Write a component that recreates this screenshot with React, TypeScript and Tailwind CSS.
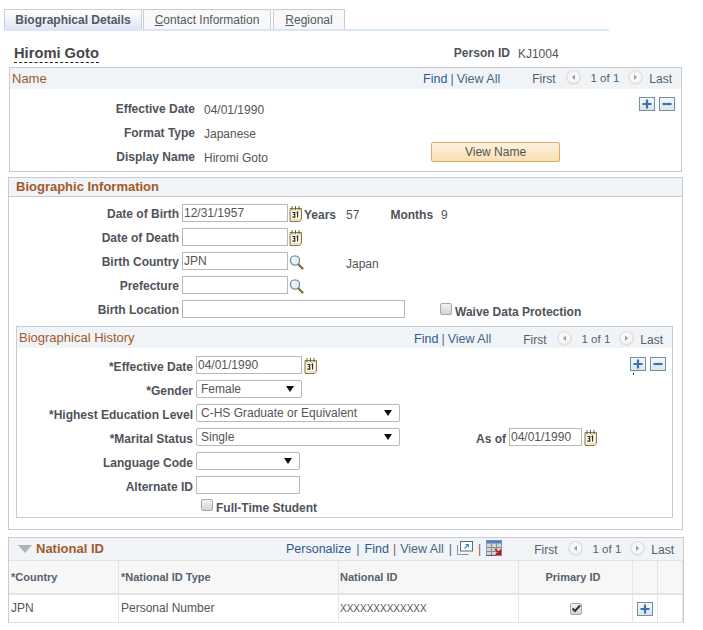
import React from "react";

const Cal = () => (
  <svg width="14" height="18" viewBox="0 0 14 18" className="mt-[1px] shrink-0">
    <path d="M1 3.5h11.5v11l-2 2H1z" fill="#f3e4b8" stroke="#8a7a50" strokeWidth="1" />
    <rect x="2.5" y="6" width="8.5" height="8" fill="#fffdf2" />
    <path d="M3 1v4M6.5 1v4M10 1v4" stroke="#6b6040" strokeWidth="1" />
    <path d="M3.4 7.5h2.4v1.4l-1 .6 1 .6v2h-2.4M7.6 8l1-.8v5.4" fill="none" stroke="#222" strokeWidth="1.1" />
  </svg>
);

const Lens = () => (
  <svg width="15" height="16" viewBox="0 0 15 16" className="mt-[1px] shrink-0">
    <path d="M9 10l4.5 4.5" stroke="#7d6a30" strokeWidth="2.2" strokeLinecap="round" />
    <circle cx="6" cy="6.5" r="4.6" fill="#e4f0f6" stroke="#7b8b94" strokeWidth="1.3" />
    <path d="M3.5 6a2.6 2.6 0 0 1 2.4-2.3" fill="none" stroke="#fff" strokeWidth="1.2" />
  </svg>
);

const Plus = () => (
  <button className="flex h-[14px] w-[16px] items-center justify-center border border-[#6f929b] bg-linear-to-b from-[#f4f8fa] to-[#dbe6ea]">
    <svg width="10" height="10" viewBox="0 0 10 10"><path d="M5 0.5v9M0.5 5h9" stroke="#3a72ad" strokeWidth="2.2" /></svg>
  </button>
);

const Minus = () => (
  <button className="flex h-[14px] w-[16px] items-center justify-center border border-[#6f929b] bg-linear-to-b from-[#f4f8fa] to-[#dbe6ea]">
    <svg width="10" height="10" viewBox="0 0 10 10"><path d="M0.5 5h9" stroke="#3a72ad" strokeWidth="2.2" /></svg>
  </button>
);

const Arrow = ({ right }: { right?: boolean }) => (
  <svg width="15" height="15" viewBox="0 0 15 15" className="shrink-0">
    <circle cx="7.5" cy="7.5" r="7.5" fill="#e2e2e2" />
    <circle cx="7.5" cy="7" r="5.8" fill="#f8f8f8" />
    <path d={right ? "M6 4.5l3.2 2.7L6 10z" : "M9 4.5L5.8 7.2 9 10z"} fill="#a0a0a0" />
  </svg>
);

const Sep = () => <span className="mx-[3px] text-[#4a6a96]">|</span>;

const Pager = () => (
  <div className="ml-[32px] flex items-center text-[12px] text-[#55606c]">
    <span>First</span>
    <span className="ml-[10px] -mt-[3px] flex"><Arrow /></span>
    <span className="ml-[10px] text-[11.5px]">1 of 1</span>
    <span className="ml-[9px] -mt-[3px] flex"><Arrow right /></span>
    <span className="ml-[6px]">Last</span>
  </div>
);

const FindView = () => (
  <div className="flex items-center text-[12.5px]">
    <span className="text-[#2f5a8f]">Find</span>
    <Sep />
    <span className="text-[#4a6488]">View All</span>
  </div>
);

const Field = ({ value = "", w = "w-[106px]" }: { value?: string; w?: string }) => (
  <input
    readOnly
    value={value}
    className={`${w} h-[18px] shrink-0 border border-[#b9b9b9] bg-white pl-[1px] text-[12px] text-[#555] outline-none`}
  />
);

const Select = ({ value = "", w }: { value?: string; w: string }) => (
  <div className={`${w} flex h-[18px] shrink-0 items-center justify-between rounded-[2px] border border-[#b9b9b9] bg-white pb-[1px] pl-[4px] pr-[7px] text-[12px] text-[#555]`}>
    <span>{value}</span>
    <svg width="8" height="6" viewBox="0 0 8 6" className="mt-[1px]"><path d="M0 0h8L4 6z" fill="#111" /></svg>
  </div>
);

const Check = ({ checked }: { checked?: boolean }) => (
  <span className="flex h-[12px] w-[12px] shrink-0 items-center justify-center rounded-[2px] border border-[#a8a8a8] bg-linear-to-b from-[#f2f2f2] to-[#d4d4d4]">
    {checked && (
      <svg width="10" height="9" viewBox="0 0 10 9"><path d="M1.5 4.5l2.5 2.5 5-5.5" fill="none" stroke="#333" strokeWidth="2" /></svg>
    )}
  </span>
);

const BioRow = ({ label, children }: { label: string; children: React.ReactNode }) => (
  <div className="flex h-[24px] items-center">
    <div className="mt-[1px] w-[173px] shrink-0 pr-[3px] text-right text-[12px] font-bold text-[#50535a]">{label}</div>
    {children}
  </div>
);

const HistRow = ({ label, children }: { label: string; children: React.ReactNode }) => (
  <div className="flex h-[24px] items-center">
    <div className="mt-[3px] w-[179px] shrink-0 pr-[3px] text-right text-[12px] font-bold text-[#50535a]">{label}</div>
    {children}
  </div>
);

const NameRow = ({ label, value }: { label: string; value: string }) => (
  <div className="flex h-[24px] items-center">
    <div className="w-[185px] text-right text-[12px] font-bold text-[#50535a]">{label}</div>
    <div className="ml-[9px] mt-[2px] text-[12px] text-[#555]">{value}</div>
  </div>
);

const Head = ({ children, cls = "" }: { children?: React.ReactNode; cls?: string }) => (
  <div className={`flex items-center border-r border-[#e4e4e4] bg-[#f7f7f7] text-[11px] font-bold text-[#55626e] ${cls}`}>{children}</div>
);

const Cell = ({ children, cls = "" }: { children?: React.ReactNode; cls?: string }) => (
  <div className={`flex items-center border-r border-[#e4e4e4] bg-white text-[12px] text-[#555] ${cls}`}>{children}</div>
);

export default function App() {
  return (
    <div className="h-[630px] w-[703px] overflow-hidden bg-white pt-[9px] font-['Liberation_Sans',Arial,sans-serif] text-[12px]">
      {/* Tabs */}
      <div className="ml-[4px] flex h-[20px] items-stretch">
        <div className="flex w-[138px] items-center justify-center border-x border-t border-[#c6ced8] bg-linear-to-b from-[#ffffff] to-[#dce7f5] font-bold text-[#52585f]">
          Biographical Details
        </div>
        <div className="ml-[1px] flex w-[128px] items-center justify-center border-x border-t border-[#c8ccd0] bg-[#f8f8f8] text-[#55595e]">
          <span><span className="underline">C</span>ontact Information</span>
        </div>
        <div className="ml-[2px] flex w-[72px] items-center justify-center border-x border-t border-[#c8ccd0] bg-[#f8f8f8] text-[#55595e]">
          <span><span className="underline">R</span>egional</span>
        </div>
      </div>
      <div className="ml-[4px] h-[2px] w-[605px] bg-[#dbe6f4]" />

      {/* Title */}
      <div className="flex h-[36px] items-start">
        <div className="ml-[14px] mt-[14px] border-b border-dashed border-[#222] text-[14.7px] leading-[17px] font-bold text-[#45484d]">Hiromi Goto</div>
        <div className="ml-[355px] mt-[13px] text-[12px] font-bold text-[#50535a]">Person ID</div>
        <div className="ml-[8px] mt-[14px] text-[12px] text-[#555]">KJ1004</div>
      </div>

      {/* Name panel */}
      <div className="ml-[9px] h-[105px] w-[673px] border border-[#c8ccd2]">
        <div className="flex h-[21px] items-center bg-[#f0f4f6] pl-[2px] pr-[9px]">
          <span className="text-[13px] text-[#a25a2c]">Name</span>
          <div className="ml-auto flex items-center pt-[1px]"><FindView /><Pager /></div>
        </div>
        <div className="flex">
          <div className="pt-[8px]">
            <NameRow label="Effective Date" value="04/01/1990" />
            <NameRow label="Format Type" value="Japanese" />
            <NameRow label="Display Name" value="Hiromi Goto" />
          </div>
          <div className="ml-auto flex w-[250px] flex-col pt-[8px]">
            <div className="flex justify-end gap-[4px] pr-[6px]"><Plus /><Minus /></div>
            <button className="mt-[31px] h-[20px] w-[129px] rounded-[2px] border border-[#dfa96f] bg-linear-to-b from-[#fdf1dc] to-[#fbdfb2] text-[12px] text-[#50535a]">View Name</button>
          </div>
        </div>
      </div>

      {/* Biographic Information */}
      <div className="ml-[8px] mt-[5px] h-[353px] w-[675px] border border-[#c8ccd2]">
        <div className="flex h-[19px] items-center border-b border-[#c8ccd2] bg-[#f0f4f6] pl-[7px]">
          <span className="text-[13px] font-bold text-[#a25a2c]">Biographic Information</span>
        </div>
        <div className="pt-[4px]">
          <BioRow label="Date of Birth">
            <Field value="12/31/1957" />
            <span className="ml-[1px] flex"><Cal /></span>
            <span className="ml-[1px] mt-[3px] font-bold text-[#50535a]">Years</span>
            <span className="ml-[10px] mt-[3px] text-[#555]">57</span>
            <span className="ml-[31px] mt-[3px] font-bold text-[#50535a]">Months</span>
            <span className="ml-[8px] mt-[3px] text-[#555]">9</span>
          </BioRow>
          <BioRow label="Date of Death">
            <Field />
            <span className="ml-[1px] flex"><Cal /></span>
          </BioRow>
          <BioRow label="Birth Country">
            <Field value="JPN" />
            <span className="ml-[1px] flex"><Lens /></span>
            <span className="ml-[42px] mt-[6px] text-[#555]">Japan</span>
          </BioRow>
          <BioRow label="Prefecture">
            <Field />
            <span className="ml-[1px] flex"><Lens /></span>
          </BioRow>
          <BioRow label="Birth Location">
            <Field w="w-[223px]" />
            <span className="ml-[35px] flex"><Check /></span>
            <span className="ml-[3px] mt-[5px] font-bold text-[#50535a]">Waive Data Protection</span>
          </BioRow>
        </div>

        {/* Biographical History */}
        <div className="ml-[7px] mt-[5px] h-[192px] w-[657px] border border-[#c8ccd2]">
          <div className="flex h-[21px] items-center bg-[#f0f4f6] pl-[2px] pr-[9px] pt-[1px]">
            <span className="text-[13px] text-[#a25a2c]">Biographical History</span>
            <div className="ml-auto flex items-center pt-[3px]"><FindView /><Pager /></div>
          </div>
          <div className="pt-[5px]">
            <HistRow label="*Effective Date">
              <Field value="04/01/1990" />
              <span className="ml-[2px] flex"><Cal /></span>
              <div className="relative ml-auto mr-[6px] flex gap-[4px] self-start pt-[4px]">
                <Plus /><Minus />
                <span className="absolute left-[3px] top-[20px] h-[2px] w-[1px] bg-[#333]" />
              </div>
            </HistRow>
            <HistRow label="*Gender"><Select value="Female" w="w-[106px]" /></HistRow>
            <HistRow label="*Highest Education Level"><Select value="C-HS Graduate or Equivalent" w="w-[204px]" /></HistRow>
            <HistRow label="*Marital Status">
              <Select value="Single" w="w-[204px]" />
              <span className="ml-[76px] mt-[3px] font-bold text-[#50535a]">As of</span>
              <span className="ml-[3px] flex"><Field value="04/01/1990" w="w-[73px]" /></span>
              <span className="ml-[2px] flex"><Cal /></span>
            </HistRow>
            <HistRow label="Language Code"><Select w="w-[104px]" /></HistRow>
            <HistRow label="Alternate ID"><Field w="w-[104px]" /></HistRow>
            <div className="flex h-[20px] items-center pl-[184px]">
              <span className="-mt-[4px] flex"><Check /></span>
              <span className="ml-[3px] mt-[2px] font-bold text-[#50535a]">Full-Time Student</span>
            </div>
          </div>
        </div>
      </div>

      {/* National ID */}
      <div className="ml-[8px] mt-[7px] w-[676px] border-x border-t border-[#c8ccd2]">
        <div className="flex h-[23px] items-center border-b border-[#e4e4e4] bg-[#f0f4f6] pl-[9px] pr-[9px]">
          <svg width="14" height="8" viewBox="0 0 14 8" className="shrink-0"><path d="M0 0h14L7 8z" fill="#b4b4b4" /></svg>
          <span className="ml-[4px] text-[13px] font-bold text-[#a25a2c]">National ID</span>
          <div className="ml-auto flex items-center pt-[1px] text-[12.5px]">
            <span className="text-[#2f5a8f]">Personalize</span>
            <span className="mx-[5px] text-[#4a6a96]">|</span>
            <span className="text-[#2f5a8f]">Find</span>
            <span className="mx-[4px] text-[#9a5a50]">|</span>
            <span className="text-[#4a6488]">View All</span>
            <span className="mx-[5px] text-[#4a6a96]">|</span>
            <svg width="16" height="14" viewBox="0 0 16 14" className="-mt-[3px] shrink-0">
              <rect x="3.5" y="0.5" width="12" height="9.5" fill="#fff" stroke="#55707c" />
              <path d="M0.5 4v9.5h11" fill="none" stroke="#7c96a2" />
              <path d="M7.5 7.5l4-4M8.5 3.5h3v3" fill="none" stroke="#3f86c4" strokeWidth="1.1" />
            </svg>
            <span className="mx-[5px] text-[#9a5a50]">|</span>
            <svg width="16" height="16" viewBox="0 0 16 16" className="-mt-[4px] shrink-0">
              <rect x="0.5" y="0.5" width="15" height="15" fill="#d4d4d4" stroke="#8f9bb8" />
              <rect x="0.5" y="0.5" width="15" height="3" fill="#5a7fc0" />
              <path d="M5.5 3.5v12M10.5 3.5v12M0.5 7.5h15M0.5 11.5h15" stroke="#8a8a8a" />
              <path d="M0.5 15.5h8" stroke="#30549a" />
              <path d="M9 9l4.5 4.5M14.5 10.5v4h-4z" stroke="#c01818" strokeWidth="1.6" fill="#c01818" />
            </svg>
            <Pager />
          </div>
        </div>
        <div className="grid grid-cols-[110px_220px_180px_114px_25px_25px]">
          <Head cls="h-[32px] pl-[2px]">*Country</Head>
          <Head cls="h-[32px] pl-[2px]">*National ID Type</Head>
          <Head cls="h-[32px] pl-[1px]">National ID</Head>
          <Head cls="h-[32px] justify-center pr-[5px]">Primary ID</Head>
          <Head cls="h-[32px]" />
          <Head cls="h-[32px]" />
        </div>
        <div className="h-[2px] bg-[#e4e4e4]" />
        <div className="grid grid-cols-[110px_220px_180px_114px_25px_25px] border-b border-[#e4e4e4]">
          <Cell cls="h-[27px] pb-[2px] pl-[2px]">JPN</Cell>
          <Cell cls="h-[27px] pb-[2px] pl-[2px]">Personal Number</Cell>
          <Cell cls="h-[27px] pl-[1px]"><span className="text-[10px]">XXXXXXXXXXXXX</span></Cell>
          <Cell cls="h-[27px] justify-center"><Check checked /></Cell>
          <Cell cls="h-[27px] justify-center"><Plus /></Cell>
          <Cell cls="h-[27px]" />
        </div>
      </div>
    </div>
  );
}
